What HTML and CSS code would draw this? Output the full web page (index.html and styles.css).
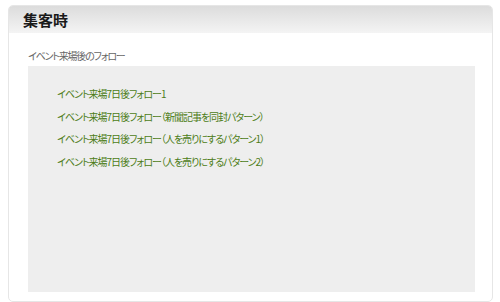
FILE: index.html
```html
<!DOCTYPE html>
<html lang="ja">
<head>
<meta charset="utf-8">
<link rel="stylesheet" href="styles.css">
</head>
<body>
<div class="card">
  <div class="card-head"><h2 class="title">集客時</h2></div>
  <div class="card-body">
    <p class="label">イベント来場後のフォロー</p>
    <div class="panel">
      <a class="item" href="#">イベント来場7日後フォロー1</a>
      <a class="item" href="#">イベント来場7日後フォロー（新聞記事を同封パターン）</a>
      <a class="item" href="#">イベント来場7日後フォロー（人を売りにするパターン1）</a>
      <a class="item" href="#">イベント来場7日後フォロー（人を売りにするパターン2）</a>
    </div>
  </div>
</div>
</body>
</html>
```
FILE: styles.css
```css
html, body { margin: 0; padding: 0; background: #ffffff; }
body {
  width: 500px; height: 302px; overflow: hidden;
  font-family: "Noto Sans CJK JP", "Noto Sans", sans-serif;
  font-feature-settings: "palt";
}
.card {
  margin: 5px 0 0 8px;
  width: 483px;
  height: 295px;
  border: 1px solid #e6e6e6;
  border-radius: 5px;
  overflow: hidden;
  box-sizing: content-box;
}
.card-head {
  height: 27px;
  background: linear-gradient(#dcdcdc, #f4f4f4);
  display: flex;
  align-items: center;
  padding-left: 14px;
}
.title {
  margin: 0;
  font-size: 15px;
  font-weight: bold;
  color: #1a1a1a;
  line-height: 1;
  font-feature-settings: normal;
}
.card-body {
  padding: 17px 17px 0 19px;
}
.label {
  margin: 0 0 4px 0;
  font-size: 10px;
  line-height: 12px;
  letter-spacing: -1.2px;
  color: #666;
}
.panel {
  background: #eeeeee;
  height: 226px;
  padding: 22px 0 0 29px;
  box-sizing: border-box;
  display: flex;
  flex-direction: column;
  gap: 10.5px;
}
.item {
  font-size: 10px;
  line-height: 12px;
  letter-spacing: -1px;
  color: #4c7c16;
  text-decoration: none;
}
```
